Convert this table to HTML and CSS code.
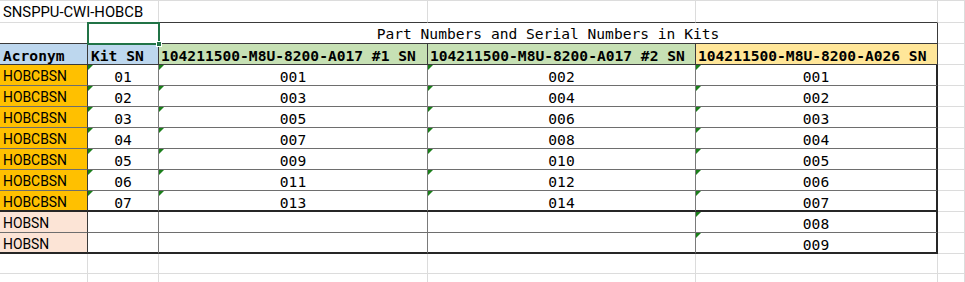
FILE: index.html
```html
<!DOCTYPE html>
<html lang="en">
<head>
<meta charset="utf-8">
<title>SNSPPU-CWI-HOBCB</title>
<link rel="stylesheet" href="styles.css">
</head>
<body>
<div class="sheet">
  <!-- row 1 -->
  <div class="c r1 sans title-cell">SNSPPU-CWI-HOBCB</div>
  <div class="c r1"></div>
  <div class="c r1 bd-b"></div>
  <div class="c r1 bd-b"></div>
  <div class="c r1 bd-b"></div>
  <div class="c r1"></div>

  <!-- row 2 -->
  <div class="c bd-b"></div>
  <div class="c bd-b bd-r sel"><span class="sel-box"></span></div>
  <div class="c bd-b bd-r span3 center cap">Part Numbers and Serial Numbers in Kits</div>
  <div class="c"></div>

  <!-- row 3 headers -->
  <div class="c bd-b bd-r hd blue">Acronym</div>
  <div class="c bd-b bd-r hd blue">Kit SN</div>
  <div class="c bd-b bd-r hd green">104211500-M8U-8200-A017 #1 SN</div>
  <div class="c bd-b bd-r hd green">104211500-M8U-8200-A017 #2 SN</div>
  <div class="c bd-b bd-r hd yellow">104211500-M8U-8200-A026 SN</div>
  <div class="c"></div>

  <!-- data rows -->
  <div class="c ln-b bd-r sans orange">HOBCBSN</div>
  <div class="c ln-b ln-r center t">01</div>
  <div class="c ln-b ln-r center t">001</div>
  <div class="c ln-b ln-r center t">002</div>
  <div class="c ln-b thick-r center t">001</div>
  <div class="c"></div>

  <div class="c ln-b bd-r sans orange">HOBCBSN</div>
  <div class="c ln-b ln-r center t">02</div>
  <div class="c ln-b ln-r center t">003</div>
  <div class="c ln-b ln-r center t">004</div>
  <div class="c ln-b thick-r center t">002</div>
  <div class="c"></div>

  <div class="c ln-b bd-r sans orange">HOBCBSN</div>
  <div class="c ln-b ln-r center t">03</div>
  <div class="c ln-b ln-r center t">005</div>
  <div class="c ln-b ln-r center t">006</div>
  <div class="c ln-b thick-r center t">003</div>
  <div class="c"></div>

  <div class="c ln-b bd-r sans orange">HOBCBSN</div>
  <div class="c ln-b ln-r center t">04</div>
  <div class="c ln-b ln-r center t">007</div>
  <div class="c ln-b ln-r center t">008</div>
  <div class="c ln-b thick-r center t">004</div>
  <div class="c"></div>

  <div class="c ln-b bd-r sans orange">HOBCBSN</div>
  <div class="c ln-b ln-r center t">05</div>
  <div class="c ln-b ln-r center t">009</div>
  <div class="c ln-b ln-r center t">010</div>
  <div class="c ln-b thick-r center t">005</div>
  <div class="c"></div>

  <div class="c ln-b bd-r sans orange">HOBCBSN</div>
  <div class="c ln-b ln-r center t">06</div>
  <div class="c ln-b ln-r center t">011</div>
  <div class="c ln-b ln-r center t">012</div>
  <div class="c ln-b thick-r center t">006</div>
  <div class="c"></div>

  <div class="c thick-b bd-r sans orange">HOBCBSN</div>
  <div class="c thick-b ln-r center t">07</div>
  <div class="c thick-b ln-r center t">013</div>
  <div class="c thick-b ln-r center t">014</div>
  <div class="c thick-b thick-r center t">007</div>
  <div class="c"></div>

  <div class="c ln-b bd-r sans peach">HOBSN</div>
  <div class="c ln-b ln-r"></div>
  <div class="c ln-b ln-r"></div>
  <div class="c ln-b ln-r"></div>
  <div class="c ln-b thick-r center t">008</div>
  <div class="c"></div>

  <div class="c thick-b bd-r sans peach">HOBSN</div>
  <div class="c thick-b ln-r"></div>
  <div class="c thick-b ln-r"></div>
  <div class="c thick-b ln-r"></div>
  <div class="c thick-b thick-r center t">009</div>
  <div class="c"></div>

  <!-- empty rows -->
  <div class="c"></div><div class="c"></div><div class="c"></div><div class="c"></div><div class="c"></div><div class="c"></div>
  <div class="c"></div><div class="c"></div><div class="c"></div><div class="c"></div><div class="c"></div><div class="c"></div>
</div>
</body>
</html>
```
FILE: styles.css
```css
html, body {
  margin: 0;
  padding: 0;
  background: #ffffff;
  overflow: hidden;
}

.sheet {
  --grid: #dcdcdc;
  --line: #6e6e6e;
  --dark: #3a3a3a;
  --thick: #262626;
  display: grid;
  grid-template-columns: 88px 71px 269px 268px 242px 1fr;
  grid-template-rows: 23px 21px 21px repeat(7, 21px) 21px 21px 20px 21px;
  width: 965px;
  font-family: "DejaVu Sans Mono", monospace;
  font-size: 14.6px;
  color: #000;
}

.c {
  box-sizing: border-box;
  border-right: 1px solid var(--grid);
  border-bottom: 1px solid var(--grid);
  padding: 3px 3px 0 3px;
  line-height: 17px;
  white-space: nowrap;
  overflow: hidden;
  min-width: 0;
}

.r1 {
  border-top: 1px solid var(--grid);
}

.sans {
  font-family: Roboto, "Liberation Sans", Arial, sans-serif;
  font-size: 13.9px;
  line-height: 17px;
  padding-top: 3px;
  padding-left: 3px;
}

.title-cell {
  overflow: visible;
  border-right-color: #ffffff;
  font-size: 14.8px;
  padding-top: 3px;
}

.bd-b { border-bottom: 1px solid var(--dark); }
.bd-r { border-right: 1px solid var(--dark); }
.ln-b { border-bottom: 1px solid var(--line); }
.ln-r { border-right: 1px solid #7a7a7a; }
.thick-b { border-bottom: 2px solid var(--thick); }
.thick-r { border-right: 2px solid var(--thick); }

.span3 { grid-column: span 3; }
.center { text-align: center; }

.cap {
  padding-top: 2px;
}

.hd {
  font-weight: bold;
  padding-left: 2px;
}
.blue { padding-left: 3px; }

.blue { background: #bdd7ee; }
.green { background: #c6e0b4; }
.yellow { background: #ffe699; }
.orange { background: #ffc000; }
.peach { background: #fce4d6; }

.t { position: relative; }
.t::before {
  content: "";
  position: absolute;
  top: 0;
  left: 0;
  border-top: 5px solid #1a7f1a;
  border-right: 5px solid transparent;
}

.sel {
  position: relative;
  overflow: visible;
}
.sel-box {
  position: absolute;
  top: -1px;
  left: -1px;
  right: -2px;
  bottom: -2px;
  border: 2px solid #217346;
  z-index: 2;
}
.sel-box::after {
  content: "";
  position: absolute;
  right: -4px;
  bottom: -4px;
  width: 4px;
  height: 4px;
  background: #217346;
  border: 1px solid #ffffff;
}
```
